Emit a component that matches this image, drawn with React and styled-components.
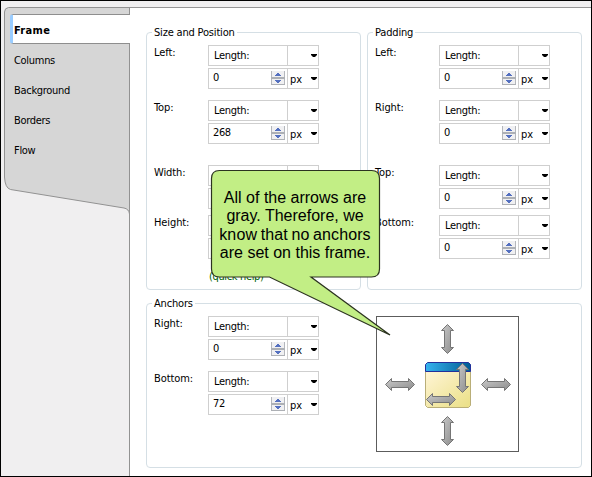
import React from "react";
import styled, { createGlobalStyle } from "styled-components";

const Global = createGlobalStyle`
  * { box-sizing: border-box; }
  body { margin: 0; background: #fff; }
`;

const Window = styled.div`
  position: relative;
  display: grid;
  grid-template-columns: 129px 1fr;
  width: 592px;
  height: 477px;
  border: 1px solid #000;
  background: #f0eff0;
  overflow: hidden;
  font: 11px/14px "DejaVu Sans Condensed", "DejaVu Sans", sans-serif;
  font-stretch: condensed;
  color: #000;
`;

const Sidebar = styled.nav`
  position: relative;
  padding: 13px 0 0 9px;
`;

const Backdrop = styled.svg`
  position: absolute;
  left: 0;
  top: 0;
`;

const Tab = styled.div`
  position: relative;
  display: flex;
  align-items: center;
  height: 30px;
  padding: 3px 0 0 4px;
  letter-spacing: ${(p) => (p.$active ? 0.3 : -0.3)}px;
  ${(p) =>
    p.$active &&
    `
    font-weight: bold;
    background: #fff;
    border: 1px solid #8e8e8e;
    border-right: 0;
    border-left: 3px solid #99ccff;
    border-radius: 3px 0 0 3px;
    padding-left: 1px;
  `}
`;

const Content = styled.main`
  display: grid;
  grid-template-columns: 215px 215px;
  grid-template-rows: 258px 165px;
  gap: 13px 6px;
  margin-top: 6px;
  padding: 24px 0 0 16px;
  border-top: 1px solid #969696;
  background: #fff;
`;

const Group = styled.section`
  display: flex;
  align-items: flex-start;
  min-width: 0;
  border: 1px solid #d5dfe5;
  border-radius: 4px;
  grid-column: ${(p) => (p.$wide ? "span 2" : "auto")};
`;

const Legend = styled.h2`
  margin: -7px 0 0 5px;
  padding: 0 2px;
  height: 14px;
  width: max-content;
  background: #fff;
  font: inherit;
  white-space: nowrap;
  letter-spacing: -0.18px;
`;

const Fields = styled.div`
  display: flex;
  flex-direction: column;
  width: 200px;
`;

const Field = styled.div`
  display: grid;
  grid-template-columns: ${(p) => p.$labelWidth}px 111px;
  height: 44px;
  margin-top: ${(p) => p.$gap}px;
  padding-left: 7px;
`;

const Label = styled.label`
  padding-top: 1px;
  white-space: nowrap;
  letter-spacing: -0.1px;
`;

const Controls = styled.div`
  display: flex;
  flex-direction: column;
  gap: 2px;
`;

const Control = styled.div`
  display: grid;
  grid-template-columns: 78px 1fr;
  height: 21px;
  border: 1px solid #cfcfcf;
  background: #fff;
`;

const ModeText = styled.span`
  padding: 3px 0 0 5px;
  letter-spacing: -0.3px;
`;

const Amount = styled.span`
  display: flex;
  justify-content: space-between;
  padding: 1px 2px 0 4px;
`;

const Value = styled.span`
  padding-top: 1px;
  letter-spacing: -0.4px;
`;

const UnitCell = styled.span`
  display: flex;
  justify-content: space-between;
  border-left: 1px solid #cfcfcf;
  padding: 4px 1px 0 2px;
`;

const Arrow = styled.svg`
  margin-top: 4px;
  margin-left: auto;
`;

const Help = styled.a`
  margin: 11px 0 0 62px;
  color: #006400;
  letter-spacing: -0.35px;
`;

const Preview = styled.div`
  width: 143px;
  height: 136px;
  margin: 12px 0 0 29px;
  border: 1px solid #5c5c5c;
`;

const Overlay = styled.svg`
  position: absolute;
  left: -1px;
  top: -1px;
`;

const CalloutText = styled.p`
  position: absolute;
  left: 210px;
  top: 188px;
  width: 168px;
  margin: 0;
  text-align: center;
  font: 16px/18.4px "Liberation Sans", Arial, sans-serif;
`;

const CalloutLine = styled.span`
  display: block;
  white-space: nowrap;
  letter-spacing: ${(p) => p.$track || 0}px;
  word-spacing: ${(p) => p.$word || 0}px;
`;

function DropArrow() {
  return (
    <Arrow width="6" height="3">
      <path d="M0 0H6V1L4 3H2L0 1Z" />
    </Arrow>
  );
}

function Spinner() {
  return (
    <svg width="14" height="15" shapeRendering="crispEdges">
      <path d="M0 1H14V14H0Z" fill="#f0f0f2" />
      <path d="M0 1H1V14H0ZM13 1H14V14H13Z" fill="#b4b7bc" />
      <path d="M0 7H14V9H0ZM0 14H14V15H0Z" fill="#adb0b5" />
      <path d="M6 3H8V4H9V5H10V6H4V5H5V4H6Z" fill="#5470c0" />
      <path d="M4 10H10V11H9V12H8V13H6V12H5V11H4Z" fill="#5470c0" />
    </svg>
  );
}

function LengthField({ label, mode = "Length:", value, unit = "px", gap, labelWidth = 54 }) {
  return (
    <Field $gap={gap} $labelWidth={labelWidth}>
      <Label>{label}</Label>
      <Controls>
        <Control>
          <ModeText>{mode}</ModeText>
          <UnitCell>
            <DropArrow />
          </UnitCell>
        </Control>
        <Control>
          <Amount>
            <Value>{value}</Value>
            <Spinner />
          </Amount>
          <UnitCell>
            {unit}
            <DropArrow />
          </UnitCell>
        </Control>
      </Controls>
    </Field>
  );
}

/* Double-headed arrow centred on the origin, 30px long. */
function DoubleArrow({ x, y, horizontal }) {
  const d = horizontal
    ? "M-14.5 0L-8.5 -6V-3H8.5V-6L14.5 0L8.5 6V3H-8.5V6Z"
    : "M0 -14.5L-6 -8.5H-3V8.5H-6L0 14.5L6 8.5H3V-8.5H6Z";
  return (
    <path d={d} transform={`translate(${x} ${y})`} fill="url(#metal)" stroke="#757575" strokeWidth="1" />
  );
}

function AnchorDiagram() {
  return (
    <svg width="141" height="134" viewBox="377 317 141 134">
      <defs>
        <linearGradient id="metal" x1="0" y1="0" x2="1" y2="1">
          <stop offset="0" stopColor="#cacaca" />
          <stop offset="1" stopColor="#8c8c8c" />
        </linearGradient>
        <linearGradient id="paper" x1="0" y1="0" x2="1" y2="1">
          <stop offset="0" stopColor="#fff5d6" />
          <stop offset="1" stopColor="#eadf85" />
        </linearGradient>
        <linearGradient id="title">
          <stop offset="0" stopColor="#35b3ef" />
          <stop offset="1" stopColor="#005c94" />
        </linearGradient>
      </defs>
      <path d="M425.5 371.5H470.5V405.5L468.5 407.5H427.5L425.5 405.5Z" fill="url(#paper)" stroke="#b9ae78" />
      <path d="M425.5 371.5V364.5L427.5 362.5H468.5L470.5 364.5V371.5Z" fill="url(#title)" stroke="#22309a" />
      <DoubleArrow x={447.5} y={339} />
      <DoubleArrow x={447.5} y={431} />
      <DoubleArrow x={400} y={384.5} horizontal />
      <DoubleArrow x={496} y={384.5} horizontal />
      <DoubleArrow x={462.5} y={378} />
      <DoubleArrow x={441} y={399.5} horizontal />
    </svg>
  );
}

export default function App() {
  return (
    <>
      <Global />
      <Window>
        <Sidebar>
          <Backdrop width="129" height="475" viewBox="1 1 129 475">
            <path
              d="M130 7.5H8.5Q4.5 8 4.5 12V177Q5 188 10.5 189.5L124 208Q129 209 129.5 214V7.5Z"
              fill="#d6d6d6"
            />
            <path
              d="M130 7.5H8.5Q4.5 8 4.5 12V177Q5 188 10.5 189.5L124 208Q129 209 129.5 214M129.5 7V476"
              fill="none"
              stroke="#929292"
            />
          </Backdrop>
          <Tab $active>Frame</Tab>
          <Tab>Columns</Tab>
          <Tab>Background</Tab>
          <Tab>Borders</Tab>
          <Tab>Flow</Tab>
        </Sidebar>
        <Content>
          <Group>
            <Fields>
              <Legend>Size and Position</Legend>
              <LengthField label="Left:" value="0" gap={5} />
              <LengthField label="Top:" value="268" gap={11} />
              <LengthField label="Width:" mode="" unit="" gap={21} />
              <LengthField label="Height:" mode="" unit="" gap={6} />
              <Help>(quick help)</Help>
            </Fields>
          </Group>
          <Group>
            <Fields>
              <Legend>Padding</Legend>
              <LengthField label="Left:" value="0" gap={5} labelWidth={64} />
              <LengthField label="Right:" value="0" gap={11} labelWidth={64} />
              <LengthField label="Top:" value="0" gap={21} labelWidth={64} />
              <LengthField label="Bottom:" value="0" gap={6} labelWidth={64} />
            </Fields>
          </Group>
          <Group $wide>
            <Fields>
              <Legend>Anchors</Legend>
              <LengthField label="Right:" value="0" gap={5} />
              <LengthField label="Bottom:" value="72" gap={11} />
            </Fields>
            <Preview>
              <AnchorDiagram />
            </Preview>
          </Group>
        </Content>
        <Overlay width="592" height="477">
          <path
            d="M219.5 170.5H371.5Q379.5 170.5 379.5 178.5V269Q379.5 277 371.5 277H311L390 335L269.5 277H219.5Q211.5 277 211.5 269V178.5Q211.5 170.5 219.5 170.5Z"
            fill="#c2ee85"
            stroke="#2c3320"
            strokeWidth="1.2"
          />
        </Overlay>
        <CalloutText>
          <CalloutLine>All of the arrows are</CalloutLine>
          <CalloutLine>gray. Therefore, we</CalloutLine>
          <CalloutLine $track={0.12} $word={-1}>know that no anchors</CalloutLine>
          <CalloutLine>are set on this frame.</CalloutLine>
        </CalloutText>
      </Window>
    </>
  );
}
